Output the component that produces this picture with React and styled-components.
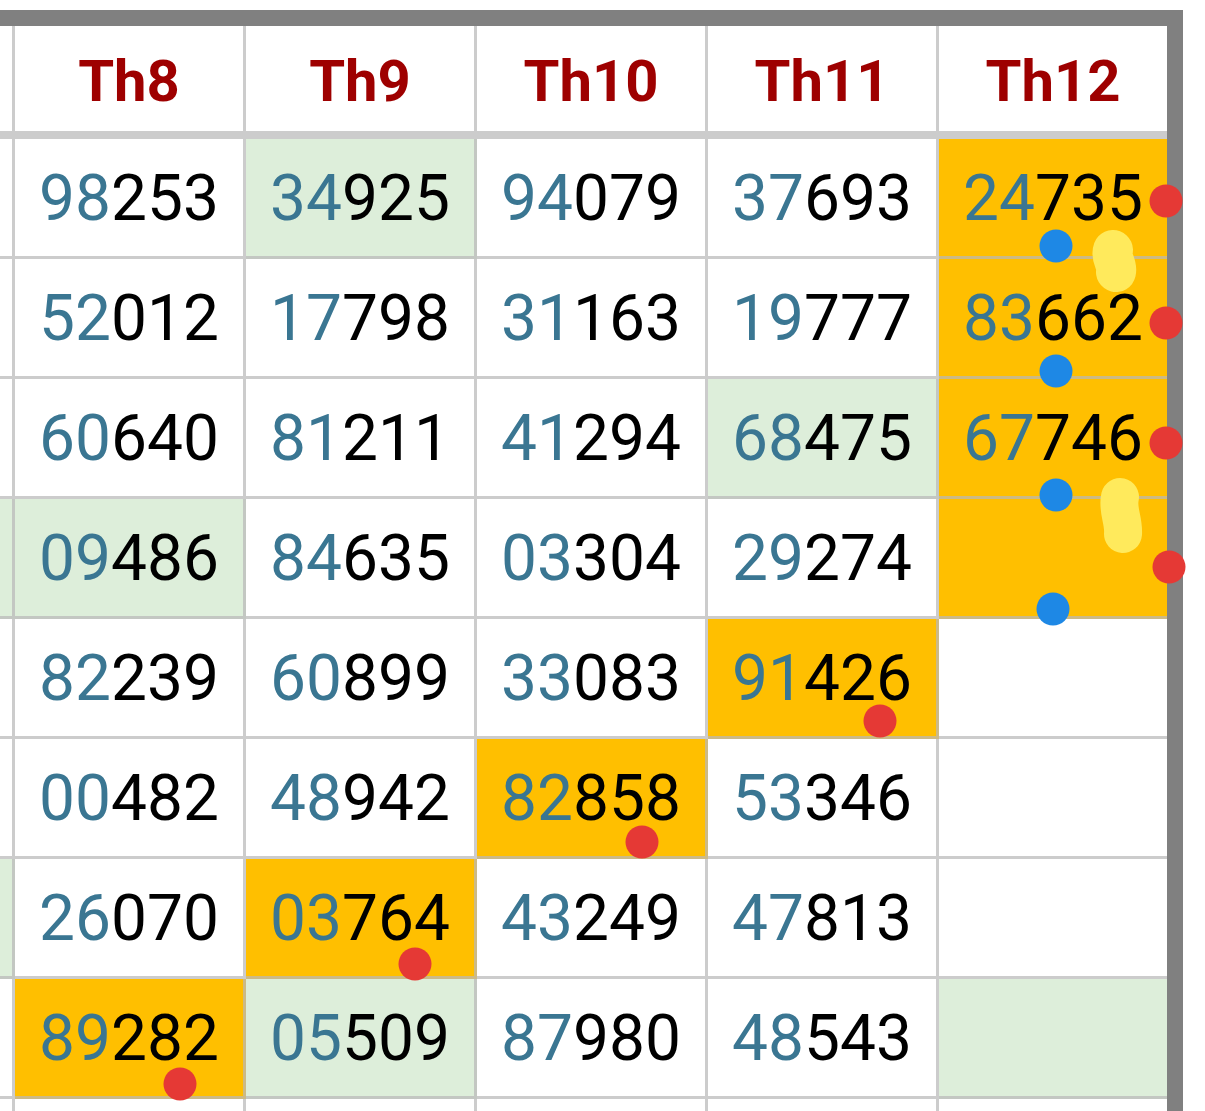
import React from "react";
import styled, { createGlobalStyle } from "styled-components";

const GlobalStyle = createGlobalStyle`
  html, body {
    margin: 0;
    padding: 0;
    background: #ffffff;
    overflow: hidden;
  }
  body {
    font-family: Roboto, "Noto Sans", sans-serif;
  }
`;

const LINE = "rgba(185, 185, 185, 0.72)";

const BG = {
  white: "#ffffff",
  orange: "#ffbf00",
  green: "#ddeeda",
};

const Page = styled.div`
  position: relative;
  width: 1205px;
  height: 1111px;
  padding-top: 10px;
  box-sizing: border-box;
  overflow: hidden;
`;

const Frame = styled.div`
  display: inline-block;
  border-top: 16px solid #808080;
  border-right: 16px solid #808080;
`;

const Grid = styled.div`
  display: grid;
  grid-template-columns: 15px repeat(4, 231px) 228px;
  grid-auto-rows: 120px;
  grid-template-rows: 113px;
`;

const HeadCell = styled.div`
  box-sizing: border-box;
  display: flex;
  align-items: center;
  justify-content: center;
  background: #ffffff;
  border-bottom: 8px solid ${LINE};
  border-right: ${(p) => (p.$last ? "none" : `3px solid ${LINE}`)};
  padding-top: 4px;
  font-family: Roboto, sans-serif;
  font-weight: 700;
  font-size: 58px;
  color: #9e0000;
`;

const Cell = styled.div`
  box-sizing: border-box;
  display: flex;
  align-items: center;
  justify-content: center;
  background: ${(p) => BG[p.$bg || "white"]};
  border-bottom: 3px solid ${LINE};
  border-right: ${(p) => (p.$last ? "none" : `3px solid ${LINE}`)};
  padding-top: 2px;
  font-family: Roboto, sans-serif;
  font-size: 64px;
  color: #000000;
  white-space: nowrap;
`;

const Head = styled.span`
  color: #3a7692;
`;

const Overlay = styled.svg`
  position: absolute;
  left: 0;
  top: 0;
  pointer-events: none;
`;

const headers = ["Th8", "Th9", "Th10", "Th11", "Th12"];

// [left strip colour, [value, colour] x5]
const rows = [
  ["white", [["98253"], ["34925", "green"], ["94079"], ["37693"], ["24735", "orange"]]],
  ["white", [["52012"], ["17798"], ["31163"], ["19777"], ["83662", "orange"]]],
  ["white", [["60640"], ["81211"], ["41294"], ["68475", "green"], ["67746", "orange"]]],
  ["green", [["09486", "green"], ["84635"], ["03304"], ["29274"], ["", "orange"]]],
  ["white", [["82239"], ["60899"], ["33083"], ["91426", "orange"], [""]]],
  ["white", [["00482"], ["48942"], ["82858", "orange"], ["53346"], [""]]],
  ["green", [["26070"], ["03764", "orange"], ["43249"], ["47813"], [""]]],
  ["white", [["89282", "orange"], ["05509", "green"], ["87980"], ["48543"], ["", "green"]]],
  ["white", [[""], [""], [""], [""], [""]]],
];

const Num = ({ value }) =>
  value ? (
    <>
      <Head>{value.slice(0, 2)}</Head>
      {value.slice(2)}
    </>
  ) : null;

const redDots = [
  [1166, 201],
  [1166, 323],
  [1166, 443],
  [1169, 567],
  [880, 721],
  [642, 842],
  [415, 964],
  [180, 1084],
];

const blueDots = [
  [1056, 246],
  [1056, 371],
  [1056, 495],
  [1053, 609],
];

export default function App() {
  return (
    <>
      <GlobalStyle />
      <Page>
        <Frame>
          <Grid>
            <HeadCell />
            {headers.map((h, i) => (
              <HeadCell key={h} $last={i === headers.length - 1}>
                {h}
              </HeadCell>
            ))}
            {rows.map(([strip, cells], r) => (
              <React.Fragment key={r}>
                <Cell $bg={strip} />
                {cells.map(([v, bg], c) => (
                  <Cell key={c} $bg={bg} $last={c === cells.length - 1}>
                    <Num value={v} />
                  </Cell>
                ))}
              </React.Fragment>
            ))}
          </Grid>
        </Frame>
        <Overlay width="1205" height="1111" viewBox="0 0 1205 1111">
          <path
            d="M1113 250 C1110 258 1118 264 1116 272"
            stroke="#ffea5c"
            strokeWidth="40"
            strokeLinecap="round"
            fill="none"
          />
          <path
            d="M1120 497 C1117 510 1124 520 1123 534"
            stroke="#ffea5c"
            strokeWidth="38"
            strokeLinecap="round"
            fill="none"
          />
          {blueDots.map(([x, y]) => (
            <circle key={`b${x}-${y}`} cx={x} cy={y} r="16.5" fill="#1e88e5" />
          ))}
          {redDots.map(([x, y]) => (
            <circle key={`r${x}-${y}`} cx={x} cy={y} r="16.5" fill="#e53935" />
          ))}
        </Overlay>
      </Page>
    </>
  );
}
